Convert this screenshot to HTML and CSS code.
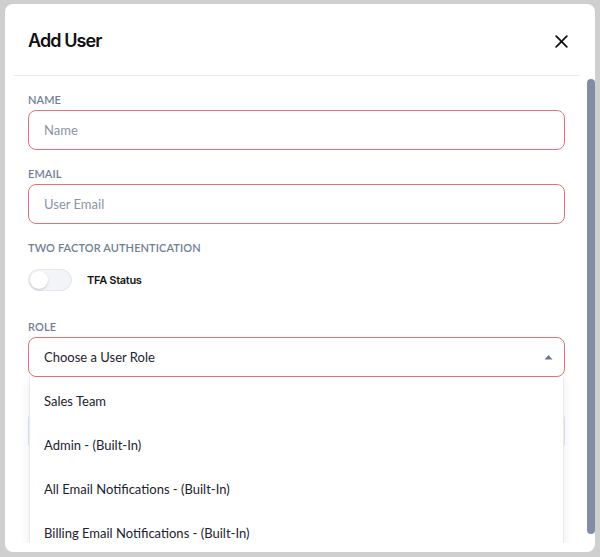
FILE: index.html
```html
<!DOCTYPE html>
<html>
<head>
<meta charset="utf-8">
<link rel="stylesheet" href="styles.css">
</head>
<body>
<div class="modal">
  <div class="header">
    <h1 class="title">Add User</h1>
    <button class="close" aria-label="Close">
      <svg width="13" height="13" viewBox="0 0 13 13"><path d="M1.2 1.2L11.8 11.8M11.8 1.2L1.2 11.8" stroke="#111" stroke-width="1.8" stroke-linecap="round"/></svg>
    </button>
  </div>
  <div class="body">
    <div class="form">
      <div class="field">
        <div class="label">Name</div>
        <div class="input error"><span class="placeholder">Name</span></div>
      </div>
      <div class="field">
        <div class="label">Email</div>
        <div class="input error"><span class="placeholder">User Email</span></div>
      </div>
      <div class="field">
        <div class="label">Two Factor Authentication</div>
        <div class="toggle-row">
          <div class="toggle"><div class="knob"></div></div>
          <span class="toggle-text">TFA Status</span>
        </div>
      </div>
      <div class="field role">
        <div class="label">Role</div>
        <div class="select-wrap">
          <div class="input error select">
            <span class="value">Choose a User Role</span>
            <svg class="caret" width="9" height="6" viewBox="0 0 9 6"><path d="M0.5 5.5L4.5 1L8.5 5.5Z" fill="#6b7890"/></svg>
          </div>
          <div class="menu">
            <div class="option">Sales Team</div>
            <div class="option">Admin - (Built-In)</div>
            <div class="option">All Email Notifications - (Built-In)</div>
            <div class="option">Billing Email Notifications - (Built-In)</div>
          </div>
        </div>
      </div>
      <div class="field">
        <div class="label">&nbsp;</div>
        <div class="input plain"></div>
      </div>
    </div>
    <div class="scrollbar"><div class="thumb"></div></div>
  </div>
</div>
</body>
</html>
```
FILE: styles.css
```css
* { box-sizing: border-box; }
html, body { margin: 0; }
body {
  background: #cfcfcf;
  padding: 4px 5px 0 5px;
  height: 557px;
  overflow: hidden;
  font-family: Lato, "Open Sans", sans-serif;
}
.modal {
  width: 590px;
  height: 548px;
  background: #fff;
  border-radius: 8px;
  overflow: hidden;
  display: flex;
  flex-direction: column;
  padding-bottom: 9px;
}
.header {
  height: 72px;
  flex: none;
  margin: 0 15px 0 9px;
  padding: 0 12px 0 14px;
  border-bottom: 1px solid #e8eaee;
  display: flex;
  align-items: center;
  justify-content: space-between;
}
.title {
  margin: 0;
  padding-top: 2px;
  font-family: Inter, sans-serif;
  font-weight: 600;
  font-size: 18px;
  letter-spacing: -0.9px;
  color: #111;
}
.close {
  border: 0;
  background: none;
  padding: 0;
  width: 13px;
  height: 13px;
  margin-top: 3px;
  display: flex;
}
.body {
  flex: 1;
  min-height: 0;
  display: flex;
  overflow: hidden;
}
.form {
  flex: 1;
  padding: 17px 22px 0 23px;
  overflow: hidden;
}
.scrollbar {
  width: 8px;
  flex: none;
  padding-top: 3px;
}
.thumb {
  height: 455px;
  background: #7f8da5;
  border-radius: 4px;
}
.field { margin-bottom: 17px; }
.label {
  font-size: 11px;
  line-height: 14px;
  font-weight: 600;
  color: #717e94;
  text-transform: uppercase;
  letter-spacing: 0.1px;
  margin-bottom: 3px;
}
.input {
  height: 40px;
  border: 1px solid #dfe3ea;
  border-radius: 8px;
  display: flex;
  align-items: center;
  padding: 0 15px;
  font-size: 13px;
  background: #fff;
}
.input.error { border-color: #e07474; }
.placeholder { color: #8a94a7; }
.value { color: #1d2330; flex: 1; }
.toggle-row {
  display: flex;
  align-items: center;
  margin-top: 14px;
  height: 22px;
  gap: 15px;
}
.toggle {
  width: 44px;
  height: 22px;
  border-radius: 11px;
  background: #f2f4f7;
  border: 1px solid #e3e7ee;
  padding: 1px;
}
.knob {
  width: 18px;
  height: 18px;
  border-radius: 50%;
  background: #fff;
  box-shadow: 0 1px 2px rgba(0,0,0,0.18);
}
.toggle-text {
  font-family: Inter, sans-serif;
  font-size: 11px;
  font-weight: 600;
  letter-spacing: -0.3px;
  color: #141414;
}
.field.role { margin-top: 29px; }
.select-wrap { position: relative; }
.caret { margin-right: -4px; }
.menu {
  position: absolute;
  left: 1px;
  right: 1px;
  top: 40px;
  padding-top: 2px;
  background: #fff;
  border: 1px solid #e7eaf0;
  border-top: 0;
  border-radius: 0 0 6px 6px;
  box-shadow: 0 4px 12px rgba(30,40,60,0.08);
  z-index: 2;
}
.option {
  height: 44px;
  display: flex;
  align-items: center;
  padding: 0 14px;
  font-size: 13px;
  color: #1d2330;
}
```
